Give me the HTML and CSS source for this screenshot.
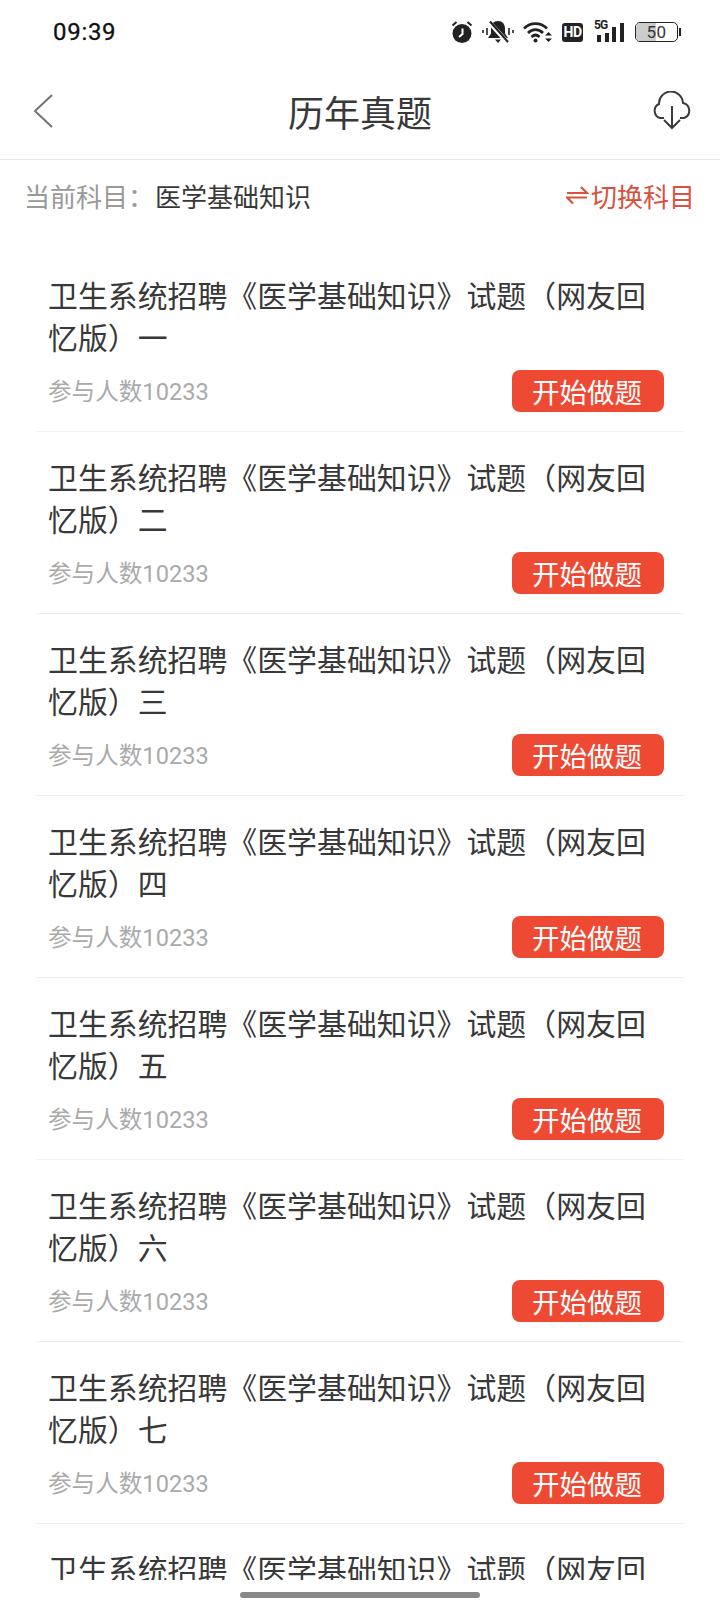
FILE: index.html
```html
<!DOCTYPE html>
<html lang="zh-CN">

<head>
    <meta charset="UTF-8">
    <meta name="viewport" content="width=device-width, initial-scale=1.0">
    <title>历年真题</title>
    <link rel="stylesheet" href="styles.css">
</head>

<body>
    <div class="status-bar">
        <div class="time">09:39</div>
        <div class="status-icons">
            <svg class="ic-alarm" width="22" height="24" viewBox="0 0 22 24">
                <circle cx="11" cy="13.500" r="9.500" fill="#222"/>
                <path d="M1.500 5.500 5.500 2M20.500 5.500 16.500 2" stroke="#222" stroke-width="2" fill="none"/>
                <path d="M11.500 8.500V14L8 17" stroke="#fff" stroke-width="2" fill="none"/>
            </svg>
            <svg class="ic-bell" width="32" height="24" viewBox="0 0 32 24">
                <path d="M16 1c-4.500 0-7 3-7 7.500v5L6 18h20l-3-4.500v-5C23 4 20.500 1 16 1zM13 19.500h6L16 23z" fill="#222"/>
                <path d="M7 2 26 23" stroke="#fff" stroke-width="4.500"/>
                <path d="M8 1.500 26 22" stroke="#222" stroke-width="2"/>
                <path d="M1 10v3M31 10v3M5 8v7M27 8v7" stroke="#222" stroke-width="1.600" fill="none"/>
            </svg>
            <svg class="ic-wifi" width="30" height="24" viewBox="0 0 30 24">
                <path d="M1 8.500C7.500 2 17.500 2 24 8.500M5 13c4.500-4.500 10.500-4.500 15 0M8.500 17c2.500-2.500 5.500-2.500 8 0" stroke="#222" stroke-width="2.600" fill="none"/>
                <circle cx="12.500" cy="20.500" r="2" fill="#222"/>
                <path d="M22 15.500h7l-3.500-3.500zM22 18.500h7l-3.500 3.500z" fill="#222"/>
            </svg>
            <div class="hd">HD</div>
            <div class="signal">
                <span class="five-g">5G</span>
                <svg width="31" height="24" viewBox="0 0 31 24">
                    <path d="M3 15h4v7H3zM11 13h4v9h-4zM18 7h4v15h-4zM26 3h4v19h-4z" fill="#222"/>
                </svg>
            </div>
            <div class="battery">
                <div class="battery-body">
                    <div class="battery-fill"></div>
                    <span class="battery-num">50</span>
                </div>
                <div class="battery-tip"></div>
            </div>
        </div>
    </div>

    <div class="nav">
        <svg class="back" width="20" height="34" viewBox="0 0 20 34">
            <path d="M19 1 2 17l17 16" stroke="#757575" stroke-width="2" fill="none"/>
        </svg>
        <div class="nav-title">历年真题</div>
        <svg class="cloud" width="42" height="40" viewBox="0 0 42 40">
            <path d="M13 27H9A7.500 7.500 0 0 1 8 13 A12 12 0 0 1 32 12 A7.800 7.800 0 0 1 33 27H29" stroke="#3c3c3c" stroke-width="2" fill="none"/>
            <path d="M21 15V37M13 29l8 8 8-8" stroke="#3c3c3c" stroke-width="2" fill="none"/>
        </svg>
    </div>

    <div class="subject">
        <div class="subject-name">
            <span class="subject-label">当前科目：</span><span class="subject-value">医学基础知识</span>
        </div>
        <div class="switch">
            <svg width="23" height="20" viewBox="0 0 23 20">
                <path d="M1 8H21L15 2M21 12.500H1L7 18.500" stroke="#d9503e" stroke-width="2.200" fill="none"/>
            </svg>
            <span>切换科目</span>
        </div>
    </div>

    <div class="list">
        <div class="item">
            <div class="item-title">卫生系统招聘《医学基础知识》试题（网友回忆版）一</div>
            <div class="item-foot">
                <span class="item-count">参与人数10233</span>
                <div class="start-btn">开始做题</div>
            </div>
        </div>
        <div class="item">
            <div class="item-title">卫生系统招聘《医学基础知识》试题（网友回忆版）二</div>
            <div class="item-foot">
                <span class="item-count">参与人数10233</span>
                <div class="start-btn">开始做题</div>
            </div>
        </div>
        <div class="item">
            <div class="item-title">卫生系统招聘《医学基础知识》试题（网友回忆版）三</div>
            <div class="item-foot">
                <span class="item-count">参与人数10233</span>
                <div class="start-btn">开始做题</div>
            </div>
        </div>
        <div class="item">
            <div class="item-title">卫生系统招聘《医学基础知识》试题（网友回忆版）四</div>
            <div class="item-foot">
                <span class="item-count">参与人数10233</span>
                <div class="start-btn">开始做题</div>
            </div>
        </div>
        <div class="item">
            <div class="item-title">卫生系统招聘《医学基础知识》试题（网友回忆版）五</div>
            <div class="item-foot">
                <span class="item-count">参与人数10233</span>
                <div class="start-btn">开始做题</div>
            </div>
        </div>
        <div class="item">
            <div class="item-title">卫生系统招聘《医学基础知识》试题（网友回忆版）六</div>
            <div class="item-foot">
                <span class="item-count">参与人数10233</span>
                <div class="start-btn">开始做题</div>
            </div>
        </div>
        <div class="item">
            <div class="item-title">卫生系统招聘《医学基础知识》试题（网友回忆版）七</div>
            <div class="item-foot">
                <span class="item-count">参与人数10233</span>
                <div class="start-btn">开始做题</div>
            </div>
        </div>
        <div class="item">
            <div class="item-title">卫生系统招聘《医学基础知识》试题（网友回忆版）八</div>
            <div class="item-foot">
                <span class="item-count">参与人数10233</span>
                <div class="start-btn">开始做题</div>
            </div>
        </div>
    </div>

    <div class="home-area">
        <div class="home-bar"></div>
    </div>
</body>

</html>
```

FILE: styles.css
```css
body {
    margin: 0;
    width: 720px;
    height: 1612px;
    overflow: hidden;
    display: flex;
    flex-direction: column;
    background: #fff;
    font-family: Roboto, 'Noto Sans CJK SC', sans-serif;
    color: #383838;
}

/* status bar */
.status-bar {
    height: 64px;
    flex: none;
    display: flex;
    justify-content: space-between;
    align-items: center;
    padding: 0 39px 0 53px;
}

.time {
    font-size: 24px;
    letter-spacing: 0.7px;
    color: #111;
    -webkit-text-stroke: 0.3px #111;
}

.status-icons {
    display: flex;
    align-items: center;
}

.ic-bell {
    margin-left: 9px;
}

.ic-wifi {
    margin-left: 9px;
}

.hd {
    margin-left: 9px;
    width: 21px;
    height: 19px;
    line-height: 19px;
    background: #222;
    color: #fff;
    border-radius: 3px;
    font-size: 14px;
    font-weight: 700;
    letter-spacing: -0.5px;
    text-align: center;
}

.signal {
    margin-left: 11px;
    position: relative;
    width: 31px;
    height: 24px;
}

.five-g {
    position: absolute;
    left: 0;
    top: -1px;
    font-size: 12px;
    line-height: 12px;
    font-weight: 700;
    letter-spacing: -1px;
    color: #222;
}

.battery {
    margin-left: 10px;
    display: flex;
    align-items: center;
}

.battery-body {
    width: 41px;
    height: 18px;
    border: 1px solid #222;
    border-radius: 5px;
    position: relative;
    overflow: hidden;
}

.battery-fill {
    width: 20px;
    height: 100%;
    background: #ccc;
}

.battery-num {
    position: absolute;
    left: 0;
    right: 0;
    top: 0;
    font-size: 17px;
    line-height: 18px;
    letter-spacing: 0.5px;
    text-align: center;
    color: #333;
}

.battery-tip {
    width: 2px;
    height: 8px;
    margin-left: 1px;
    background: #222;
}

/* nav */
.nav {
    height: 93px;
    flex: none;
    display: flex;
    justify-content: space-between;
    align-items: center;
    padding: 0 27px 2px 33px;
    border-bottom: 1px solid #e8e8e8;
}

.back {
    margin-right: 16px;
}

.nav-title {
    font-size: 36px;
    color: #383838;
}

/* current subject */
.subject {
    height: 70px;
    flex: none;
    display: flex;
    justify-content: space-between;
    align-items: center;
    padding: 0 25px 4px 24px;
    font-size: 26px;
}

.subject-label {
    margin-right: 1px;
    color: #999;
}

.subject-value {
    color: #383838;
}

.switch {
    display: flex;
    align-items: center;
    gap: 2px;
    color: #d9503e;
}

/* list */
.list {
    flex: 1;
    min-height: 0;
    overflow: hidden;
    padding: 16px 37px 0;
}

.item {
    padding: 26px 19px 19px 11px;
    border-bottom: 1px solid #f0f0f0;
}

.item-title {
    max-width: 605px;
    font-size: 29.900px;
    line-height: 42px;
    color: #383838;
}

.item-foot {
    margin-top: 10px;
    display: flex;
    justify-content: space-between;
    align-items: center;
}

.item-count {
    padding-bottom: 2px;
    font-size: 23.600px;
    color: #aaa;
}

.start-btn {
    width: 150px;
    height: 42px;
    padding-right: 2px;
    line-height: 48px;
    overflow: hidden;
    text-align: center;
    background: #ee4a33;
    border-radius: 8px;
    font-size: 27.500px;
    color: #fff;
}

/* home indicator */
.home-area {
    height: 32px;
    flex: none;
    padding-top: 12px;
    box-sizing: border-box;
}

.home-bar {
    width: 240px;
    height: 6px;
    margin: 0 auto;
    border-radius: 3px;
    background: #888;
}
```
